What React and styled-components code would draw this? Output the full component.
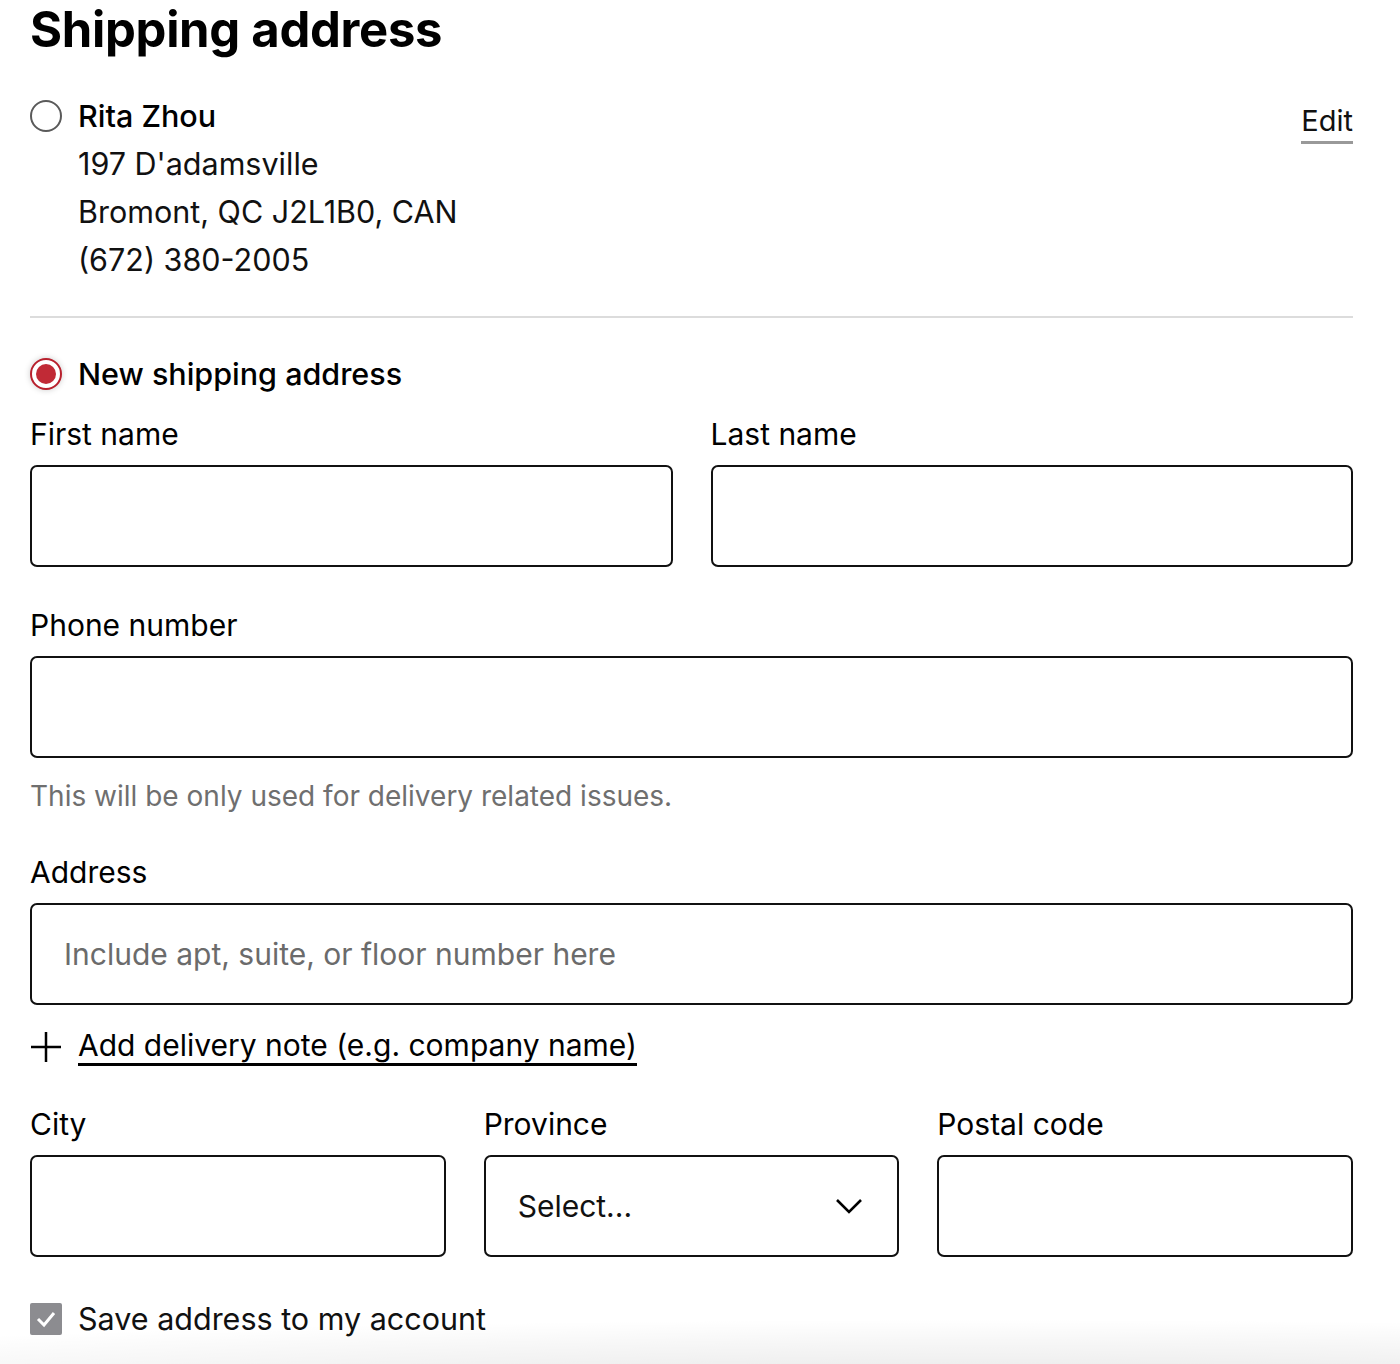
import React from "react";
import styled, { createGlobalStyle } from "styled-components";

const Global = createGlobalStyle`
  html, body { margin: 0; padding: 0; background: #fff; }
  body { font-family: Inter, "Noto Sans", sans-serif; color: #111; }
  * { box-sizing: border-box; }
`;

const Page = styled.div`
  position: relative;
  width: 1400px;
  height: 1364px;
  overflow: hidden;
  padding: 0 47px 0 30px;
`;

const Title = styled.h1`
  margin: 0;
  font-size: 49px;
  font-weight: 700;
  line-height: 60px;
  letter-spacing: -0.3px;
  color: #000;
`;

const SavedRow = styled.div`
  display: flex;
  justify-content: space-between;
  align-items: flex-start;
  margin-top: 32px;
  padding-bottom: 32px;
  border-bottom: 2px solid #dcdcdc;
`;

const RadioLine = styled.div`
  display: flex;
  gap: 16px;
  align-items: flex-start;
`;

const Radio = styled.span`
  flex: none;
  width: 32px;
  height: 32px;
  border-radius: 50%;
  margin-top: ${(p) => (p.$checked ? 0 : 8)}px;
  border: 2px solid ${(p) => (p.$checked ? "#b8202d" : "#5a5a5a")};
  background: #fff;
  display: flex;
  align-items: center;
  justify-content: center;
  box-shadow: ${(p) => (p.$checked ? "0 0 6px rgba(0,0,0,0.2)" : "none")};
  &::after {
    content: "";
    display: ${(p) => (p.$checked ? "block" : "none")};
    width: 20px;
    height: 20px;
    border-radius: 50%;
    background: #c12a36;
  }
`;

const AddressBlock = styled.div`
  display: flex;
  flex-direction: column;
  font-size: 30.5px;
  line-height: 48px;
  color: #111;
`;

const Name = styled.span`
  font-weight: 500;
  color: #000;
`;

const EditLink = styled.a`
  font-size: 29px;
  line-height: 40px;
  margin-top: 9px;
  color: #111;
  text-decoration: none;
  border-bottom: 3px solid #999;
`;

const NewRow = styled.div`
  margin-top: 36px;
  display: flex;
  gap: 16px;
  align-items: center;
  font-size: 30.5px;
  font-weight: 500;
  color: #000;
  line-height: 40px;
`;

const Grid = styled.div`
  display: grid;
  grid-template-columns: ${(p) => `repeat(${p.$cols}, minmax(0, 1fr))`};
  column-gap: 38px;
  margin-top: ${(p) => p.$mt || 0}px;
`;

const Field = styled.div`
  display: flex;
  flex-direction: column;
  min-width: 0;
`;

const Label = styled.label`
  font-size: 30px;
  line-height: 40px;
  color: #000;
  margin-bottom: 11px;
`;

const Input = styled.input`
  width: 100%;
  height: 102px;
  border: 2px solid #111;
  border-radius: 7px;
  padding: 0 32px;
  font-family: inherit;
  font-size: 30px;
  color: #111;
  outline: none;
  background: #fff;
  &::placeholder { color: #6b6b6b; }
`;

const Help = styled.p`
  margin: 18px 0 0;
  font-size: 28px;
  line-height: 40px;
  color: #6f6f6f;
`;

const SelectBox = styled.div`
  height: 102px;
  border: 2px solid #111;
  border-radius: 7px;
  padding: 0 34px 0 32px;
  display: flex;
  align-items: center;
  justify-content: space-between;
  font-size: 30px;
  color: #111;
`;

const AddNote = styled.div`
  display: flex;
  align-items: center;
  gap: 16px;
  margin-top: 22px;
  font-size: 30px;
  line-height: 40px;
`;

const NoteLink = styled.a`
  color: #000;
  text-decoration: none;
  border-bottom: 3px solid #000;
  line-height: 36px;
`;

const CheckRow = styled.div`
  display: flex;
  align-items: center;
  gap: 16px;
  margin-top: 42px;
  font-size: 30.5px;
  line-height: 40px;
  color: #111;
`;

const CheckBox = styled.span`
  width: 32px;
  height: 32px;
  background: #8c8c90;
  border-radius: 2px;
  display: flex;
  align-items: center;
  justify-content: center;
`;

const Fade = styled.div`
  position: absolute;
  left: 0;
  right: 0;
  bottom: 0;
  height: 90px;
  pointer-events: none;
  background: radial-gradient(140% 100% at 70% 130%, rgba(0,0,0,0.1) 0%, rgba(0,0,0,0.04) 50%, rgba(0,0,0,0) 80%);
`;

export default function App() {
  return (
    <Page>
      <Global />
      <Title>Shipping address</Title>
      <SavedRow>
        <RadioLine>
          <Radio />
          <AddressBlock>
            <Name>Rita Zhou</Name>
            <span>197 D'adamsville</span>
            <span>Bromont, QC J2L1B0, CAN</span>
            <span>(672) 380-2005</span>
          </AddressBlock>
        </RadioLine>
        <EditLink href="#">Edit</EditLink>
      </SavedRow>
      <NewRow>
        <Radio $checked />
        New shipping address
      </NewRow>
      <Grid $cols={2} $mt={20}>
        <Field>
          <Label>First name</Label>
          <Input />
        </Field>
        <Field>
          <Label>Last name</Label>
          <Input />
        </Field>
      </Grid>
      <Grid $cols={1} $mt={38}>
        <Field>
          <Label>Phone number</Label>
          <Input />
        </Field>
      </Grid>
      <Help>This will be only used for delivery related issues.</Help>
      <Grid $cols={1} $mt={36}>
        <Field>
          <Label>Address</Label>
          <Input placeholder="Include apt, suite, or floor number here" />
        </Field>
      </Grid>
      <AddNote>
        <svg width="32" height="32" viewBox="0 0 32 32">
          <path d="M16 1v30M1 16h30" stroke="#000" strokeWidth="2.5" fill="none" />
        </svg>
        <NoteLink href="#">Add delivery note (e.g. company name)</NoteLink>
      </AddNote>
      <Grid $cols={3} $mt={38}>
        <Field>
          <Label>City</Label>
          <Input />
        </Field>
        <Field>
          <Label>Province</Label>
          <SelectBox>
            <span>Select...</span>
            <svg width="28" height="16" viewBox="0 0 28 16">
              <path d="M2 2l12 12L26 2" stroke="#000" strokeWidth="2.6" fill="none" />
            </svg>
          </SelectBox>
        </Field>
        <Field>
          <Label>Postal code</Label>
          <Input />
        </Field>
      </Grid>
      <CheckRow>
        <CheckBox>
          <svg width="22" height="18" viewBox="0 0 22 18">
            <path d="M3 9l6 6L19 3" stroke="#fff" strokeWidth="3" fill="none" />
          </svg>
        </CheckBox>
        Save address to my account
      </CheckRow>
      <Fade />
    </Page>
  );
}
